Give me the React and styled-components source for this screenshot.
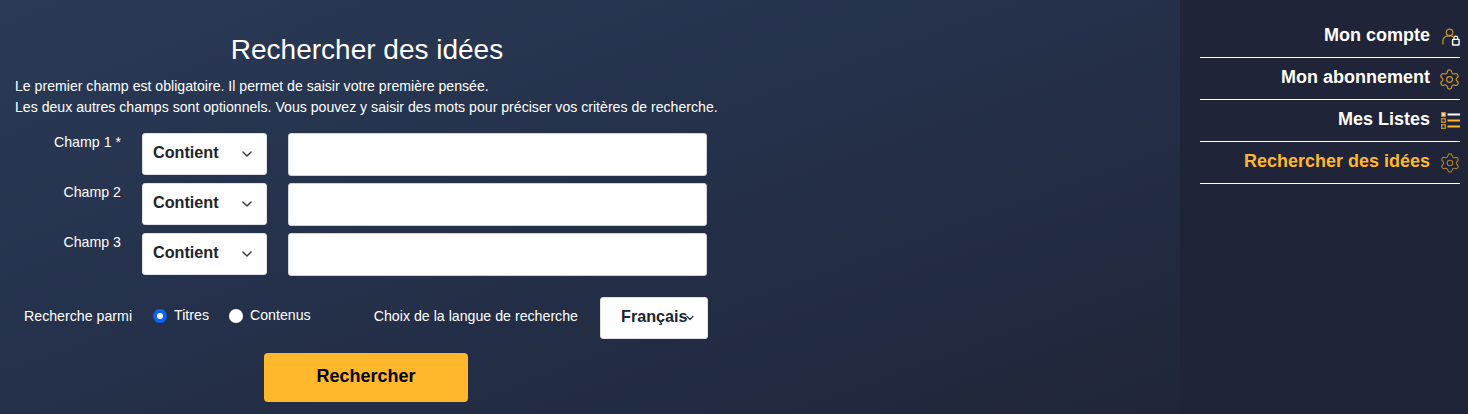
import React from 'react'
import styled, { createGlobalStyle } from 'styled-components'
import { Settings } from 'lucide-react'

const GlobalStyle = createGlobalStyle`
  html, body {
    margin: 0;
    padding: 0;
    height: 100%;
    overflow: hidden;
  }
  * {
    box-sizing: border-box;
  }
  body {
    font-family: 'Liberation Sans', Arial, sans-serif;
  }
`

const Page = styled.div`
  display: flex;
  width: 1468px;
  height: 414px;
  overflow: hidden;
  background: #1f2438;
`

const Main = styled.main`
  width: 1180px;
  padding: 33px 0 0 15px;
  color: #fff;
  background: linear-gradient(160deg, #2a3a55 0%, #25314b 45%, #1f2639 100%);
`

const Content = styled.div`
  width: 704px;
`

const Title = styled.h1`
  margin: 0 0 9px;
  font-size: 28px;
  line-height: 34px;
  font-weight: 400;
  text-align: center;
`

const Intro = styled.p`
  margin: 0 0 15px;
  font-size: 14.12px;
  line-height: 21px;
`

const FieldRow = styled.div`
  display: flex;
  height: 43px;
  margin-bottom: 7px;
`

const FieldLabel = styled.label`
  width: 106px;
  margin-right: 21px;
  font-size: 14.2px;
  line-height: 18px;
  text-align: right;
`

const SelectBox = styled.div`
  display: flex;
  align-items: center;
  justify-content: space-between;
  flex: none;
  width: ${(p) => p.$width}px;
  height: 42px;
  padding: ${(p) => p.$padding};
  background: #fff;
  border: 1px solid #dee2e6;
  border-radius: 3px;
  color: #212529;
  font-size: 16.2px;
  font-weight: 700;
  span {
    position: relative;
    top: -2px;
  }
`

const Chevron = styled.svg`
  flex: none;
  width: ${(p) => p.$size}px;
  height: ${(p) => p.$size}px;
  margin-left: ${(p) => p.$overlap || 0}px;
  fill: none;
  stroke: #343a40;
  stroke-width: ${(p) => p.$stroke};
  stroke-linecap: round;
  stroke-linejoin: round;
`

const TextInput = styled.input`
  width: 419px;
  height: 43px;
  margin-left: 21px;
  padding: 6px 12px;
  background: #fff;
  border: 1px solid #ced4da;
  border-radius: 3px;
  outline: none;
`

const OptionsRow = styled.div`
  display: flex;
  align-items: flex-start;
  margin-top: 21px;
  font-size: 14.2px;
  line-height: 18px;
`

const OptionsLabel = styled.span`
  margin: 10px 21px 0 9px;
`

const RadioLabel = styled.label`
  display: flex;
  align-items: flex-start;
  margin: 9px ${(p) => p.$gap}px 0 0;
`

const Radio = styled.input`
  appearance: none;
  width: 14px;
  height: 14px;
  margin: 3px 7px 0 0;
  background: #fff;
  border-radius: 50%;
  &:checked {
    border: 4.5px solid #0d63f3;
  }
`

const LanguageLabel = styled.span`
  margin: 10px 22px 0 0;
`

const SubmitRow = styled.div`
  display: flex;
  justify-content: center;
  margin-top: 14px;
`

const SubmitButton = styled.button`
  width: 204px;
  height: 49px;
  margin-right: 2px;
  padding: 0 0 2px;
  background: #ffb72b;
  border: none;
  border-radius: 4px;
  color: #000;
  font-family: inherit;
  font-size: 18px;
  font-weight: 700;
`

const Sidebar = styled.aside`
  width: 288px;
  padding: 16px 8px 0 20px;
  background: #1f2438;
`

const MenuItem = styled.a`
  display: flex;
  align-items: flex-start;
  justify-content: flex-end;
  height: 42px;
  padding-top: 9px;
  border-bottom: 1px solid #fff;
  color: ${(p) => (p.$active ? '#ffb72b' : '#fff')};
  font-size: 18px;
  line-height: 20px;
  font-weight: 700;
`

const IconSlot = styled.span`
  display: flex;
  justify-content: flex-end;
  width: 30px;
  height: 20px;
  color: ${(p) => (p.$active ? '#a87f2e' : '#c8932d')};
  svg {
    display: block;
  }
`

const GearIcon = styled(Settings)`
  flex: none;
  margin: 1px -1px 0 0;
`

const ChevronIcon = ({ size, stroke, overlap }) => (
  <Chevron viewBox="0 0 24 24" $size={size} $stroke={stroke} $overlap={overlap}>
    <path d="M5 8.5l7 7 7-7" />
  </Chevron>
)

const UserLockIcon = () => (
  <svg width="18" height="18" viewBox="0 0 19 19" style={{ marginTop: 3 }}>
    <circle cx="8" cy="4.6" r="3.5" fill="none" stroke="currentColor" strokeWidth="1.3" />
    <path d="M1 17.5v-4c0-3 2.5-5.2 7-5.2 1.5 0 3 .3 4 .8" fill="none" stroke="currentColor" strokeWidth="1.3" />
    <path d="M12.7 12v-1.6a1.9 1.9 0 0 1 3.8 0V12" fill="none" stroke="#fff" strokeWidth="1.3" />
    <rect x="11.2" y="12" width="6.8" height="6" rx="0.5" fill="none" stroke="#fff" strokeWidth="1.5" />
  </svg>
)

const ListIcon = () => (
  <svg width="19" height="18" viewBox="0 0 19 18" style={{ marginTop: 3 }}>
    <rect x="0.7" y="0.7" width="3.6" height="3.6" fill="#fff" stroke="currentColor" strokeWidth="1.3" />
    <rect x="0.7" y="6.7" width="3.6" height="3.6" fill="none" stroke="currentColor" strokeWidth="1.3" />
    <rect x="0.7" y="12.7" width="3.6" height="3.6" fill="none" stroke="currentColor" strokeWidth="1.3" />
    <rect x="6.5" y="1.5" width="12.5" height="2" fill="#fff" />
    <rect x="6.5" y="7.5" width="12.5" height="2" fill="#ffb72b" />
    <rect x="6.5" y="13.5" width="12.5" height="2" fill="#ffb72b" />
  </svg>
)

const fields = ['Champ 1 *', 'Champ 2', 'Champ 3']

const menu = [
  { label: 'Mon compte', icon: <UserLockIcon /> },
  { label: 'Mon abonnement', icon: <GearIcon size={23} strokeWidth={1.25} /> },
  { label: 'Mes Listes', icon: <ListIcon /> },
  { label: 'Rechercher des idées', icon: <GearIcon size={22} strokeWidth={1.25} />, active: true },
]

const App = () => {
  return (
    <Page>
      <GlobalStyle />
      <Main>
        <Content>
          <Title>Rechercher des idées</Title>
          <Intro>
            Le premier champ est obligatoire. Il permet de saisir votre première pensée.
            <br />
            Les deux autres champs sont optionnels. Vous pouvez y saisir des mots pour préciser vos critères de recherche.
          </Intro>
          {fields.map((field) => (
            <FieldRow key={field}>
              <FieldLabel>{field}</FieldLabel>
              <SelectBox $width={125} $padding="0 12px 0 10px">
                <span>Contient</span>
                <ChevronIcon size={14} stroke={2.4} />
              </SelectBox>
              <TextInput type="text" />
            </FieldRow>
          ))}
          <OptionsRow>
            <OptionsLabel>Recherche parmi</OptionsLabel>
            <RadioLabel $gap={20}>
              <Radio type="radio" name="scope" defaultChecked />
              Titres
            </RadioLabel>
            <RadioLabel $gap={63}>
              <Radio type="radio" name="scope" />
              Contenus
            </RadioLabel>
            <LanguageLabel>Choix de la langue de recherche</LanguageLabel>
            <SelectBox $width={108} $padding="0 12px 0 20px">
              <span>Français</span>
              <ChevronIcon size={10} stroke={3.4} overlap={-4} />
            </SelectBox>
          </OptionsRow>
          <SubmitRow>
            <SubmitButton type="button">Rechercher</SubmitButton>
          </SubmitRow>
        </Content>
      </Main>
      <Sidebar>
        {menu.map((item) => (
          <MenuItem key={item.label} $active={item.active}>
            {item.label}
            <IconSlot $active={item.active}>{item.icon}</IconSlot>
          </MenuItem>
        ))}
      </Sidebar>
    </Page>
  )
}

export default App
